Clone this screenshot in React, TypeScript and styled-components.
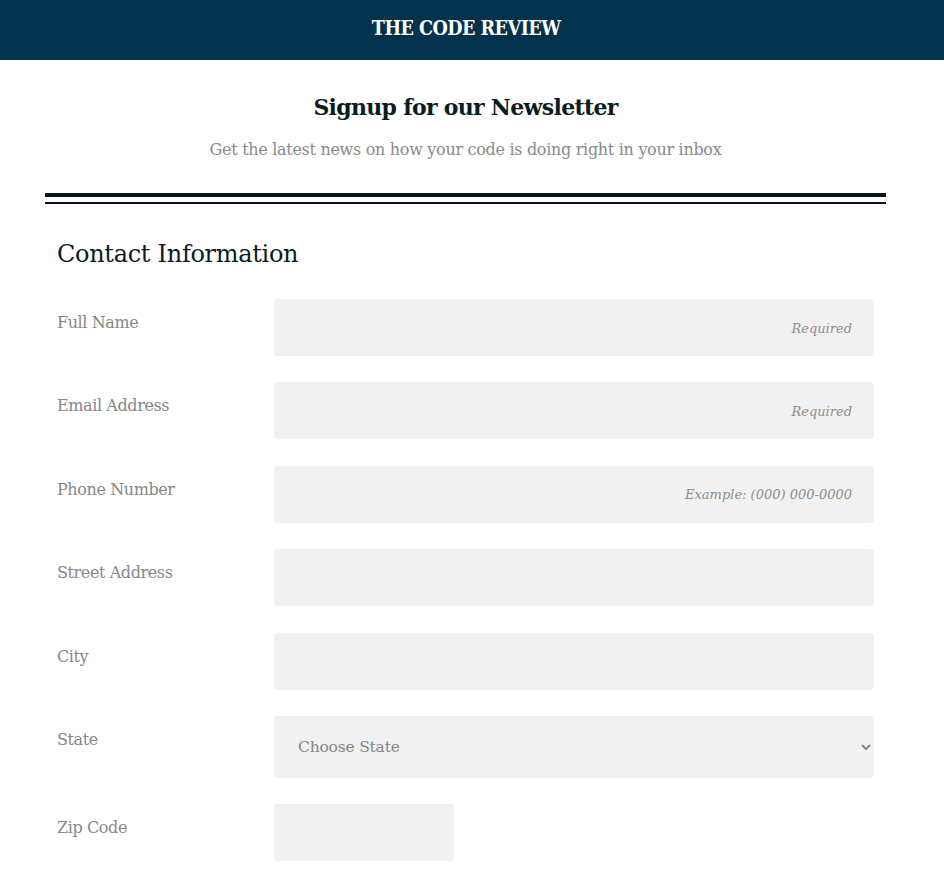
import React from "react";
import styled, { createGlobalStyle } from "styled-components";

const GlobalStyle = createGlobalStyle`
  html, body {
    margin: 0;
    padding: 0;
    background: #fff;
  }
  body {
    font-family: "DejaVu Serif", "Liberation Serif", serif;
  }
`;

const StyledPage = styled.div`
  display: flex;
  flex-direction: column;
  width: 100%;
`;

const StyledHeader = styled.header`
  display: flex;
  align-items: center;
  justify-content: center;
  height: 60px;
  padding-right: 12px;
  background-color: #03324c;
`;

const StyledBrand = styled.h2`
  margin: 0 0 4px;
  color: #fff;
  font-size: 20px;
  font-weight: 700;
  letter-spacing: -0.6px;
  transform: scaleX(0.88);
`;

const StyledMain = styled.main`
  display: flex;
  flex-direction: column;
  width: 841px;
  margin-left: 45px;
`;

const StyledIntro = styled.section`
  display: flex;
  flex-direction: column;
  align-items: center;
  padding: 34px 0 34px;
`;

const StyledTitle = styled.h1`
  margin: 0;
  color: #0b1c1e;
  font-size: 22px;
  font-weight: 700;
  letter-spacing: -0.7px;
`;

const StyledSubtitle = styled.p`
  margin: 20px 0 0;
  color: #8a8a8a;
  font-size: 16px;
  letter-spacing: -0.3px;
`;

const StyledRule = styled.div`
  height: 4px;
  padding-bottom: 5px;
  box-sizing: content-box;
  border-bottom: 2px solid #041618;
  background: linear-gradient(#041618, #041618) top / 100% 4px no-repeat;
`;

const StyledForm = styled.form`
  display: flex;
  flex-direction: column;
  padding: 0 12px;
`;

const StyledSectionTitle = styled.h3`
  margin: 36px 0 31px;
  color: #0b1c1e;
  font-size: 24px;
  font-weight: 400;
  letter-spacing: -0.3px;
`;

const StyledRow = styled.div`
  display: grid;
  grid-template-columns: 217px 1fr;
  align-items: start;
  margin-bottom: 26.4px;
`;

const StyledLabel = styled.label`
  padding-top: 14px;
  color: #878787;
  font-size: 16px;
  letter-spacing: -0.4px;
`;

const StyledInput = styled.input<{ $narrow?: boolean }>`
  box-sizing: border-box;
  width: ${(p) => (p.$narrow ? "180px" : "600px")};
  height: 57px;
  padding: 0 22px;
  border: none;
  border-radius: 4px;
  background-color: #f1f1f1;
  font-family: inherit;
  font-size: 15px;
  color: #555;
  text-align: right;
  outline: none;

  &::placeholder {
    color: #8d8d8d;
    font-style: italic;
    font-size: 13px;
  }
`;

const StyledSelect = styled.select`
  box-sizing: border-box;
  width: 600px;
  height: 62px;
  padding: 0 20px;
  border: none;
  border-radius: 4px;
  background-color: #f1f1f1;
  font-family: inherit;
  font-size: 15.5px;
  letter-spacing: -0.2px;
  color: #868686;
  outline: none;
`;

type FieldProps = {
  label: string;
  placeholder?: string;
  narrow?: boolean;
};

const Field: React.FC<FieldProps> = ({ label, placeholder, narrow }) => (
  <StyledRow>
    <StyledLabel>{label}</StyledLabel>
    <StyledInput type="text" placeholder={placeholder} $narrow={narrow} />
  </StyledRow>
);

const App: React.FC = () => {
  return (
    <StyledPage>
      <GlobalStyle />
      <StyledHeader>
        <StyledBrand>THE CODE REVIEW</StyledBrand>
      </StyledHeader>
      <StyledMain>
        <StyledIntro>
          <StyledTitle>Signup for our Newsletter</StyledTitle>
          <StyledSubtitle>
            Get the latest news on how your code is doing right in your inbox
          </StyledSubtitle>
        </StyledIntro>
        <StyledRule />
        <StyledForm>
          <StyledSectionTitle>Contact Information</StyledSectionTitle>
          <Field label="Full Name" placeholder="Required" />
          <Field label="Email Address" placeholder="Required" />
          <Field label="Phone Number" placeholder="Example: (000) 000-0000" />
          <Field label="Street Address" />
          <Field label="City" />
          <StyledRow>
            <StyledLabel>State</StyledLabel>
            <StyledSelect defaultValue="">
              <option value="">Choose State</option>
              <option value="CA">California</option>
              <option value="NY">New York</option>
              <option value="TX">Texas</option>
            </StyledSelect>
          </StyledRow>
          <Field label="Zip Code" narrow />
        </StyledForm>
      </StyledMain>
    </StyledPage>
  );
};

export default App;
